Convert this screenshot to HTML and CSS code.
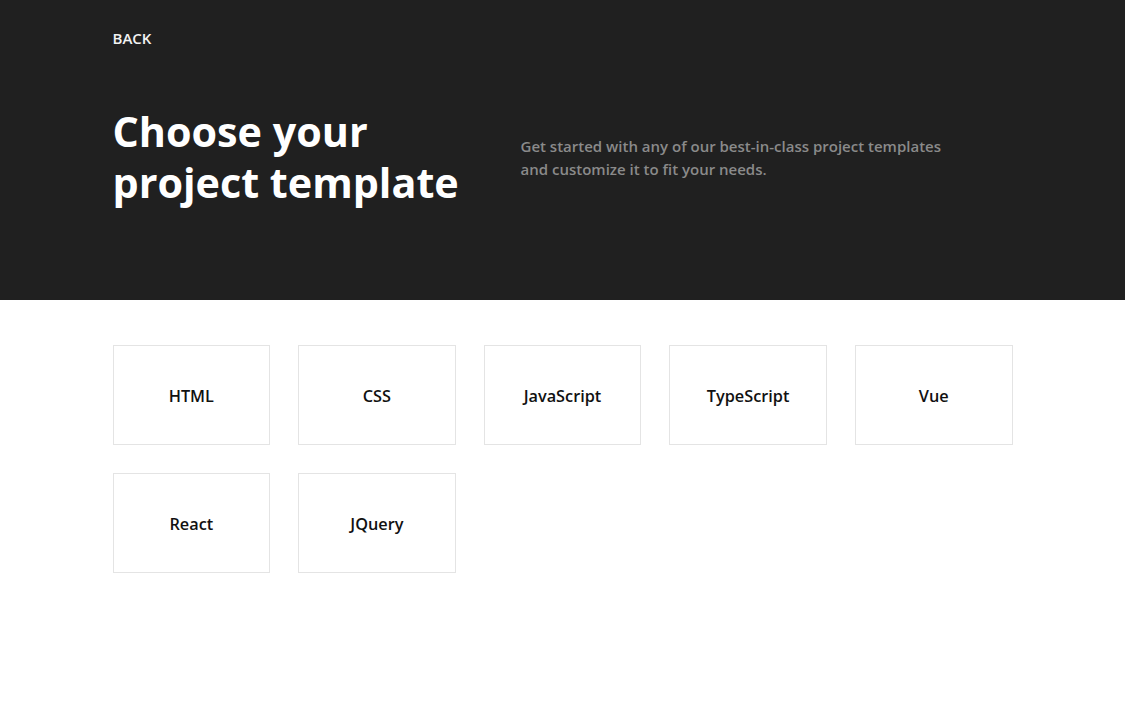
FILE: index.html
```html
<!DOCTYPE html>
<html lang="en">
<head>
    <meta charset="UTF-8">
    <meta name="viewport" content="width=device-width, initial-scale=1.0">
    <title>Choose your project template</title>
    <link rel="stylesheet" href="styles.css">
</head>
<body>
    <header class="hero">
        <div class="container">
            <a href="#" class="back-link">BACK</a>
            <div class="hero-content">
                <h1>Choose your project template</h1>
                <p>Get started with any of our best-in-class project templates and customize it to fit your needs.</p>
            </div>
        </div>
    </header>

    <main class="container">
        <div class="template-grid">
            <a href="#" class="template-card">HTML</a>
            <a href="#" class="template-card">CSS</a>
            <a href="#" class="template-card">JavaScript</a>
            <a href="#" class="template-card">TypeScript</a>
            <a href="#" class="template-card">Vue</a>
            <a href="#" class="template-card">React</a>
            <a href="#" class="template-card">JQuery</a>
        </div>
    </main>
</body>
</html>
```

FILE: styles.css
```css
body {
    font-family: "Open Sans", "Liberation Sans", sans-serif;
    margin: 0;
    background: #fff;
}

.container {
    width: 900px;
    margin: 0 auto;
}

.hero {
    background: #202020;
    height: 300px;
}

.back-link {
    display: inline-block;
    margin-top: 28px;
    color: #f2f2f2;
    font-size: 15px;
    font-weight: 600;
    line-height: 20px;
    text-decoration: none;
}

.hero-content {
    display: grid;
    grid-template-columns: 408px 1fr;
    margin-top: 57px;
}

.hero-content h1 {
    margin: 0;
    color: #fff;
    font-size: 41.3px;
    font-weight: 700;
    line-height: 51px;
    max-width: 360px;
}

.hero-content p {
    margin: 29px 0 0;
    color: #8a8a8a;
    font-size: 15px;
    font-weight: 600;
    line-height: 23px;
    max-width: 430px;
}

.template-grid {
    display: grid;
    grid-template-columns: repeat(5, 1fr);
    gap: 28px;
    margin-top: 45px;
}

.template-card {
    display: flex;
    align-items: center;
    justify-content: center;
    height: 100px;
    box-sizing: border-box;
    border: 1px solid #e4e4e4;
    color: #111;
    font-size: 16.3px;
    font-weight: 600;
    text-decoration: none;
    padding-top: 2px;
}
```
